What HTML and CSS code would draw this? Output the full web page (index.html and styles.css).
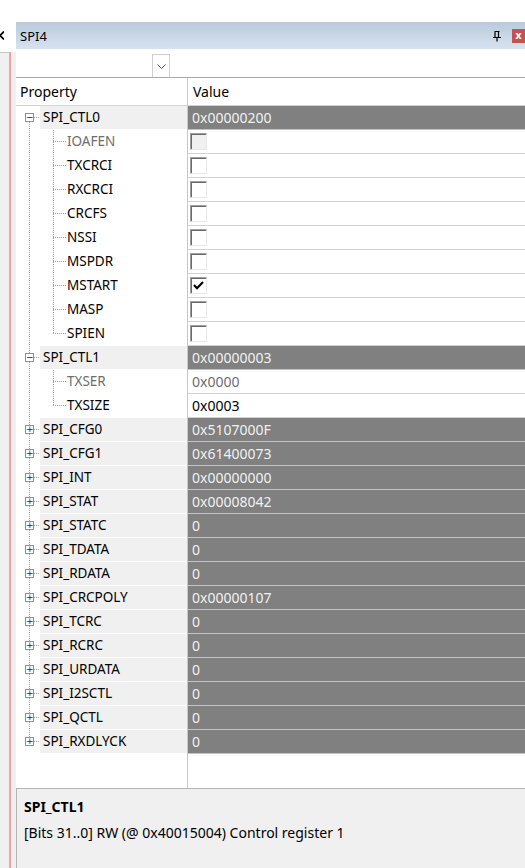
FILE: index.html
```html
<!DOCTYPE html>
<html lang="en">
<head>
  <meta charset="UTF-8">
  <title>SPI4</title>
  <link rel="stylesheet" href="styles.css">
</head>
<body>
  <div class="topgap"></div>
  <div class="screen">
    <div class="side">
      <div class="side-top">
        <svg class="side-close" width="4" height="9" viewBox="0 0 4 9"><path d="M-4 0.5l8 8M4 0.5l-8 8" stroke="#000" stroke-width="1.6"/></svg>
      </div>
      <div class="side-pane"></div>
    </div>

    <div class="panel">
      <div class="titlebar">
        <span class="title">SPI4</span>
        <span class="pin">
          <svg width="10" height="11" viewBox="0 0 10 11">
            <path d="M2.5 0.5h5M3 0.5v5.5M6.5 0.5v5.5M1 6.5h8M5 6.5v4" stroke="#000" stroke-width="1.2" fill="none"/>
          </svg>
        </span>
        <span class="close">x</span>
      </div>

      <div class="toolbar">
        <span class="drop">
          <svg width="9" height="5" viewBox="0 0 9 5"><path d="M0.5 0.5l4 4 4-4" stroke="#555" fill="none"/></svg>
        </span>
      </div>

      <div class="grid">
        <div class="head">
          <div class="hprop">Property</div>
          <div class="hval">Value</div>
        </div>

        <div class="rows">
          <div class="row group first">
            <div class="prop"><span class="lead"><span class="exp">&minus;</span></span><span class="name">SPI_CTL0</span></div>
            <div class="val">0x00000200</div>
          </div>
          <div class="row child">
            <div class="prop"><span class="lead"></span><span class="branch"></span><span class="name off">IOAFEN</span></div>
            <div class="val"><span class="chk dis"></span></div>
          </div>
          <div class="row child">
            <div class="prop"><span class="lead"></span><span class="branch"></span><span class="name">TXCRCI</span></div>
            <div class="val"><span class="chk"></span></div>
          </div>
          <div class="row child">
            <div class="prop"><span class="lead"></span><span class="branch"></span><span class="name">RXCRCI</span></div>
            <div class="val"><span class="chk"></span></div>
          </div>
          <div class="row child">
            <div class="prop"><span class="lead"></span><span class="branch"></span><span class="name">CRCFS</span></div>
            <div class="val"><span class="chk"></span></div>
          </div>
          <div class="row child">
            <div class="prop"><span class="lead"></span><span class="branch"></span><span class="name">NSSI</span></div>
            <div class="val"><span class="chk"></span></div>
          </div>
          <div class="row child">
            <div class="prop"><span class="lead"></span><span class="branch"></span><span class="name">MSPDR</span></div>
            <div class="val"><span class="chk"></span></div>
          </div>
          <div class="row child">
            <div class="prop"><span class="lead"></span><span class="branch"></span><span class="name">MSTART</span></div>
            <div class="val"><span class="chk">
              <svg width="11" height="9" viewBox="0 0 11 9"><path d="M1 4l3 3.2 6-6.2" stroke="#000" stroke-width="2.2" fill="none"/></svg>
            </span></div>
          </div>
          <div class="row child">
            <div class="prop"><span class="lead"></span><span class="branch"></span><span class="name">MASP</span></div>
            <div class="val"><span class="chk"></span></div>
          </div>
          <div class="row child endkid">
            <div class="prop"><span class="lead"></span><span class="branch"></span><span class="name">SPIEN</span></div>
            <div class="val"><span class="chk"></span></div>
          </div>

          <div class="row group">
            <div class="prop"><span class="lead"><span class="exp">&minus;</span></span><span class="name">SPI_CTL1</span></div>
            <div class="val">0x00000003</div>
          </div>
          <div class="row child">
            <div class="prop"><span class="lead"></span><span class="branch"></span><span class="name off">TXSER</span></div>
            <div class="val text off">0x0000</div>
          </div>
          <div class="row child endkid">
            <div class="prop"><span class="lead"></span><span class="branch"></span><span class="name">TXSIZE</span></div>
            <div class="val text">0x0003</div>
          </div>

          <div class="row group">
            <div class="prop"><span class="lead"><span class="exp">+</span></span><span class="name">SPI_CFG0</span></div>
            <div class="val">0x5107000F</div>
          </div>
          <div class="row group">
            <div class="prop"><span class="lead"><span class="exp">+</span></span><span class="name">SPI_CFG1</span></div>
            <div class="val">0x61400073</div>
          </div>
          <div class="row group">
            <div class="prop"><span class="lead"><span class="exp">+</span></span><span class="name">SPI_INT</span></div>
            <div class="val">0x00000000</div>
          </div>
          <div class="row group">
            <div class="prop"><span class="lead"><span class="exp">+</span></span><span class="name">SPI_STAT</span></div>
            <div class="val">0x00008042</div>
          </div>
          <div class="row group">
            <div class="prop"><span class="lead"><span class="exp">+</span></span><span class="name">SPI_STATC</span></div>
            <div class="val">0</div>
          </div>
          <div class="row group">
            <div class="prop"><span class="lead"><span class="exp">+</span></span><span class="name">SPI_TDATA</span></div>
            <div class="val">0</div>
          </div>
          <div class="row group">
            <div class="prop"><span class="lead"><span class="exp">+</span></span><span class="name">SPI_RDATA</span></div>
            <div class="val">0</div>
          </div>
          <div class="row group">
            <div class="prop"><span class="lead"><span class="exp">+</span></span><span class="name">SPI_CRCPOLY</span></div>
            <div class="val">0x00000107</div>
          </div>
          <div class="row group">
            <div class="prop"><span class="lead"><span class="exp">+</span></span><span class="name">SPI_TCRC</span></div>
            <div class="val">0</div>
          </div>
          <div class="row group">
            <div class="prop"><span class="lead"><span class="exp">+</span></span><span class="name">SPI_RCRC</span></div>
            <div class="val">0</div>
          </div>
          <div class="row group">
            <div class="prop"><span class="lead"><span class="exp">+</span></span><span class="name">SPI_URDATA</span></div>
            <div class="val">0</div>
          </div>
          <div class="row group">
            <div class="prop"><span class="lead"><span class="exp">+</span></span><span class="name">SPI_I2SCTL</span></div>
            <div class="val">0</div>
          </div>
          <div class="row group">
            <div class="prop"><span class="lead"><span class="exp">+</span></span><span class="name">SPI_QCTL</span></div>
            <div class="val">0</div>
          </div>
          <div class="row group last">
            <div class="prop"><span class="lead"><span class="exp">+</span></span><span class="name">SPI_RXDLYCK</span></div>
            <div class="val">0</div>
          </div>

          <div class="filler"><div class="prop"></div><div class="val"></div></div>
        </div>
      </div>

      <div class="desc">
        <div class="desc-name">SPI_CTL1</div>
        <div class="desc-text">[Bits 31..0] RW (@ 0x40015004) Control register 1</div>
      </div>
    </div>
  </div>
</body>
</html>
```

FILE: styles.css
```css
html, body {
  margin: 0;
  padding: 0;
}
body {
  width: 525px;
  height: 868px;
  overflow: hidden;
  background: #fff;
  font-family: "Noto Sans", "Open Sans", Arial, sans-serif;
  font-size: 13.5px;
  color: #000;
  display: flex;
  flex-direction: column;
}
.topgap {
  height: 22px;
  flex: none;
}
.screen {
  flex: 1;
  display: flex;
  min-height: 0;
}

/* neighbour pane edge on the left */
.side {
  width: 16px;
  flex: none;
  display: flex;
  flex-direction: column;
  background: #f0f0f0;
}
.side-top {
  height: 30px;
  background: #fff;
}
.side-close {
  display: block;
  margin-top: 9px;
}
.side-pane {
  flex: 1;
  width: 9px;
  border-top: 1px solid #c8c8c8;
  border-right: 2px solid #e9a3a3;
  background: #f0f0f0;
}

.panel {
  flex: 1;
  display: flex;
  flex-direction: column;
  min-width: 0;
}
.titlebar {
  height: 27px;
  display: flex;
  align-items: center;
  background: linear-gradient(#bacadc, #d6e2f0);
}
.title {
  padding-left: 4px;
  flex: 1;
  font-size: 13px;
}
.pin {
  display: flex;
  margin-right: 10px;
  margin-top: 2px;
}
.close {
  width: 13px;
  height: 14px;
  background: #c75050;
  color: #fff;
  font: bold 10px/13px "DejaVu Sans", sans-serif;
  text-align: center;
}

.toolbar {
  height: 28px;
  border-bottom: 1px solid #a8a8a8;
  display: flex;
  align-items: flex-end;
}
.drop {
  margin-left: 136px;
  width: 16px;
  height: 22px;
  border: 1px solid #d0d0d0;
  border-bottom: none;
  display: flex;
  align-items: center;
  justify-content: center;
}

.grid {
  flex: 1;
  display: flex;
  flex-direction: column;
  min-height: 0;
}
.head {
  height: 27px;
  display: flex;
  border-bottom: 1px solid #d4d4d4;
}
.hprop {
  width: 167px;
  padding-left: 4px;
  line-height: 28px;
  font-size: 14px;
}
.hval {
  flex: 1;
  border-left: 1px solid #c8c8c8;
  padding-left: 5px;
  line-height: 28px;
  font-size: 14px;
}

.rows {
  flex: 1;
  display: flex;
  flex-direction: column;
}
.row {
  height: 24px;
  display: flex;
  flex: none;
}
.prop {
  width: 171px;
  display: flex;
}
.val {
  flex: 1;
  border-left: 1px solid #c8c8c8;
  display: flex;
  align-items: center;
  padding-left: 4px;
  height: 23px;
  border-bottom: 1px solid #d4d4d4;
  font-size: 14px;
}
.group .val {
  background: #808080;
  color: #f0f0f0;
  border-bottom-color: #c4c4c4;
}
.val.text.off {
  color: #6d6d6d;
}

/* tree connectors, dotted */
.lead {
  width: 24px;
  flex: none;
  display: flex;
  align-items: center;
  background-image: repeating-linear-gradient(#a0a0a0 0 1px, transparent 1px 2px);
  background-size: 1px 100%;
  background-position: 13px 0;
  background-repeat: no-repeat;
}
.group .lead {
  background-image:
    repeating-linear-gradient(#a0a0a0 0 1px, transparent 1px 2px),
    repeating-linear-gradient(90deg, #a0a0a0 0 1px, transparent 1px 2px);
  background-size: 1px 100%, 6px 1px;
  background-position: 13px 0, 18px 11px;
}
.group.first .lead {
  background-size: 1px 50%, 6px 1px;
  background-position: 13px 100%, 18px 11px;
}
.group.last .lead {
  background-size: 1px 50%, 6px 1px;
  background-position: 13px 0, 18px 11px;
}
.exp {
  width: 7px;
  height: 7px;
  margin: -1px 0 0 9px;
  border: 1px solid #919191;
  background: #fff;
  color: #1a1a5a;
  font: 9px/7px "DejaVu Sans", sans-serif;
  text-align: center;
}
.branch {
  width: 27px;
  flex: none;
  background-image:
    repeating-linear-gradient(#a0a0a0 0 1px, transparent 1px 2px),
    repeating-linear-gradient(90deg, #a0a0a0 0 1px, transparent 1px 2px);
  background-size: 1px 100%, 14px 1px;
  background-position: 13px 0, 13px 11px;
  background-repeat: no-repeat;
}
.endkid .branch {
  background-size: 1px 12px, 14px 1px;
}
.name {
  flex: 1;
  height: 23px;
  line-height: 23px;
  font-size: 13.5px;
  white-space: nowrap;
}
.group .name {
  background: #f0f0f0;
  padding-left: 3px;
}
.name.off {
  color: #6d6d6d;
}

.chk {
  width: 15px;
  height: 15px;
  margin-left: -2px;
  border-top: 1px solid #a0a0a0;
  border-left: 1px solid #a0a0a0;
  border-right: 1px solid #e8e8e8;
  border-bottom: 1px solid #e8e8e8;
  box-shadow: inset 1px 1px 0 #696969;
  background: #fff;
  display: flex;
  align-items: center;
  justify-content: center;
}
.chk.dis {
  background: #f0f0f0;
}

.filler {
  flex: 1;
  display: flex;
}
.filler .prop {
  width: 171px;
}
.filler .val {
  height: auto;
  border-bottom: none;
}

.desc {
  height: 80px;
  flex: none;
  background: #f0f0f0;
  border-top: 1px solid #b4b4b4;
  border-left: 1px solid #b4b4b4;
  padding: 6px 0 0 7px;
  box-sizing: border-box;
}
.desc-name {
  font-weight: bold;
  font-size: 14px;
  line-height: 24px;
}
.desc-text {
  font-size: 14px;
  line-height: 28px;
}
```
